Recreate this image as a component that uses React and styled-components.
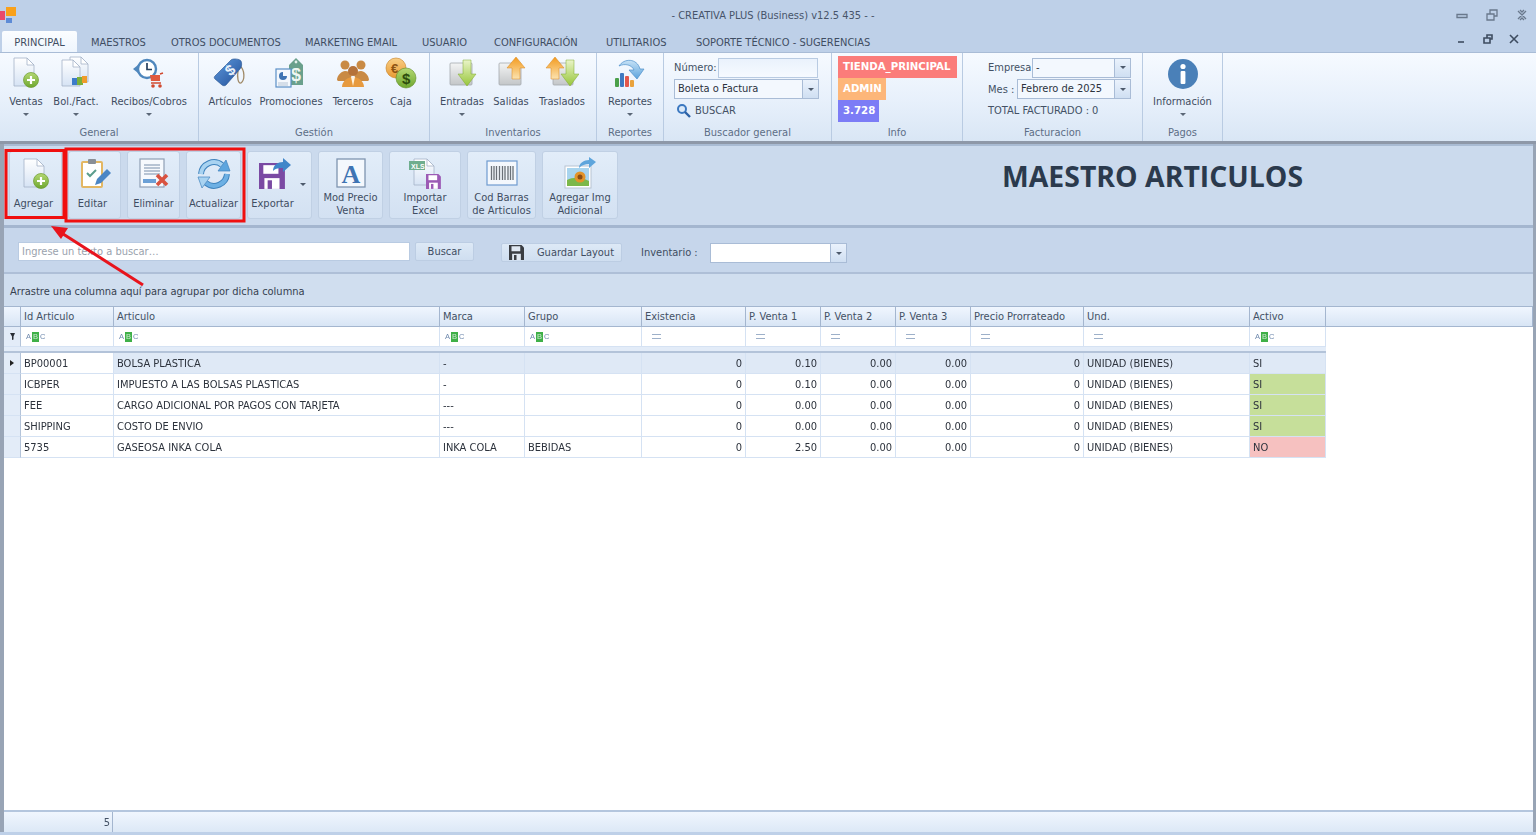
import React from 'react';
import styled, { createGlobalStyle } from 'styled-components';

const GlobalStyle = createGlobalStyle`
  html, body { margin: 0; padding: 0; height: 100%; overflow: hidden; }
  body { background: #bed0e8; font-family: "DejaVu Sans Condensed", "DejaVu Sans", "Liberation Sans", sans-serif; font-stretch: condensed; }
  #root { height: 100%; }
`;

const Page = styled.div`
  position: relative;
  width: 1536px;
  height: 835px;
  display: flex;
  flex-direction: column;
  overflow: hidden;
  font-size: 11px;
  color: #435165;
  filter: blur(0.35px);
`;

/* title bar + tabs */
const TitleBar = styled.div`
  height: 30px;
  display: grid;
  grid-template-columns: 40px 1fr 120px;
  align-items: center;
  background: #bed0e8;
`;
const Logo = styled.svg`
  width: 18px;
  height: 20px;
  display: block;
`;
const WindowTitle = styled.div`
  text-align: center;
  padding-left: 90px;
  font-size: 11px;
  color: #47546a;
`;
const WindowBtns = styled.div`
  display: flex;
  justify-content: flex-end;
  gap: 16px;
  padding-right: 7px;
`;
const TabStrip = styled.div`
  height: 22px;
  display: flex;
  align-items: flex-end;
  padding-left: 2px;
  background: #bed0e8;
`;
const Tab = styled.div`
  height: 21px;
  width: ${p => p.$w}px;
  line-height: 24px;
  text-align: ${p => (p.$active ? 'center' : 'left')};
  font-size: 11px;
  white-space: nowrap;
  color: #3f4d62;
  background: ${p => (p.$active ? 'linear-gradient(#fbfdff, #eef5fd)' : 'transparent')};
  border-radius: 2px 2px 0 0;
`;
const TabGap = styled.div`
  width: 14px;
`;
const TabSpacer = styled.div`
  flex: 1;
`;
const MdiBtns = styled.div`
  display: flex;
  gap: 12px;
  padding: 0 15px 6px 0;
`;

/* ribbon */
const Ribbon = styled.div`
  height: 89px;
  display: flex;
  background: linear-gradient(#f6faff, #e7f0fb 55%, #d9e6f5);
  border-top: 1px solid #a9bcd6;
  box-sizing: border-box;
`;
const Group = styled.div`
  width: ${p => p.$w}px;
  display: flex;
  flex-direction: column;
  border-right: 1px solid #b9cbe2;
  box-sizing: border-box;
`;
const GroupBody = styled.div`
  flex: 1;
  display: flex;
  padding: ${p => (p.$fields ? 4 : 3)}px 0 0 ${p => p.$pad || 0}px;
  flex-direction: ${p => (p.$col ? 'column' : 'row')};
`;
const GroupLabel = styled.div`
  height: 17px;
  line-height: 17px;
  text-align: center;
  font-size: 11px;
  color: #5d6e86;
`;
const BigBtn = styled.div`
  width: ${p => p.$w}px;
  display: flex;
  flex-direction: column;
  align-items: center;
  white-space: nowrap;
  font-size: 11px;
  color: #3f4d62;
`;
const BigLabel = styled.div`
  line-height: 14px;
  margin-top: 5px;
`;
const Caret = styled.div`
  width: 0;
  height: 0;
  margin-top: 4px;
  border: 3px solid transparent;
  border-top: 3px solid #5b6777;
  border-bottom: 0;
`;
const FieldRow = styled.div`
  height: 21.5px;
  width: ${p => (p.$w ? `${p.$w}px` : 'auto')};
  display: flex;
  align-items: center;
  justify-content: ${p => (p.$between ? 'space-between' : 'flex-start')};
  white-space: nowrap;
  font-size: 11px;
  color: #435165;
`;
const FieldLabel = styled.span`
  width: ${p => p.$w}px;
  flex: none;
`;
const FieldInput = styled.div`
  width: ${p => p.$w}px;
  height: 20px;
  box-sizing: border-box;
  background: linear-gradient(#eaf2fc, #f6faff);
  border: 1px solid #b9cbe2;
`;
const ComboBox = styled.div`
  width: ${p => p.$w}px;
  height: 20px;
  margin-top: ${p => p.$mt || 0}px;
  box-sizing: border-box;
  display: flex;
  border: 1px solid #a9bcd6;
  background: ${p => p.$bg || '#f3f8fe'};
  color: #2c333e;
  font-size: 11px;
`;
const ComboText = styled.div`
  flex: 1;
  line-height: 18px;
  padding-left: 3px;
`;
const ComboArrow = styled.div`
  width: 15px;
  display: flex;
  align-items: center;
  justify-content: center;
  background: linear-gradient(#eaf2fc, #cfdff2);
  border-left: 1px solid #a9bcd6;
`;
const ArrowMark = styled.i`
  width: 0;
  height: 0;
  border: 3px solid transparent;
  border-top: 3px solid #4d5a6c;
  border-bottom: 0;
`;
const SearchLink = styled.div`
  display: flex;
  align-items: center;
  gap: 4px;
  padding-left: 2px;
  color: #435165;
`;
const Badge = styled.div`
  height: 22px;
  width: ${p => p.$w}px;
  box-sizing: border-box;
  padding-left: 5px;
  line-height: 22px;
  background: ${p => p.$bg};
  color: #fff;
  font-family: "DejaVu Sans", sans-serif;
  font-stretch: normal;
  font-weight: 700;
  font-size: 10.2px;
  white-space: nowrap;
`;

const Separator = styled.div`
  height: 3px;
  background: #8e98a8;
`;

/* main area */
const Main = styled.div`
  flex: 1;
  display: flex;
  flex-direction: column;
  background: #fff;
  border-left: 4px solid #98a4b5;
  border-right: 3px solid #98a4b5;
  min-height: 0;
`;
const Toolbar = styled.div`
  height: 84px;
  box-sizing: border-box;
  display: flex;
  gap: 6px;
  padding: 5px 0 0 5px;
  background: #cbdaed;
  border-top: 2px solid #a9bbd3;
  border-bottom: 3px solid #a4b6cf;
`;
const ToolBtn = styled.div`
  position: relative;
  width: ${p => p.$w}px;
  height: 68px;
  box-sizing: border-box;
  padding: 5px ${p => p.$pr || 0}px 0 0;
  display: flex;
  flex-direction: column;
  align-items: center;
  text-align: center;
  background: linear-gradient(#e2edf9, #d3e1f2);
  border: 1px solid #c0d0e4;
  border-radius: 3px;
  font-size: 11px;
  color: #3f4d62;
`;
const ToolLabel = styled.div`
  line-height: 13px;
  margin-top: ${p => (p.$two ? 0 : 6)}px;
  margin-right: ${p => p.$shift || 0}px;
  white-space: pre-line;
`;
const DropMark = styled.i`
  position: absolute;
  right: 5px;
  top: 31px;
  width: 0;
  height: 0;
  border: 3px solid transparent;
  border-top: 3px solid #4d5a6c;
  border-bottom: 0;
`;
const PageTitle = styled.h1`
  margin: 5px 0 0 378px;
  font-family: "Open Sans", sans-serif;
  font-stretch: normal;
  font-weight: 700;
  font-size: 28.4px;
  line-height: 40px;
  color: #2b3a4d;
  white-space: nowrap;
`;
const SearchBar = styled.div`
  height: 46px;
  box-sizing: border-box;
  display: flex;
  align-items: center;
  padding: 3px 0 0 14px;
  background: #c6d6eb;
  border-bottom: 2px solid #aebfd7;
`;
const SearchInput = styled.div`
  width: 392px;
  height: 19px;
  box-sizing: border-box;
  padding-left: 3px;
  line-height: 18px;
  background: #fff;
  border: 1px solid #b9cbe2;
  color: #9aa2ad;
  font-size: 11px;
`;
const FlatBtn = styled.div`
  width: ${p => p.$w}px;
  height: 19px;
  box-sizing: border-box;
  margin-left: ${p => p.$ml}px;
  margin-top: ${p => p.$mt || 0}px;
  display: flex;
  align-items: center;
  justify-content: center;
  gap: 13px;
  background: linear-gradient(#dde9f6, #cfdef0);
  border: 1px solid #bccde3;
  border-radius: 2px;
  font-size: 11px;
  color: #3f4d62;
`;
const InvLabel = styled.div`
  width: 69px;
  margin: 2px 0 0 19px;
  font-size: 11px;
  color: #3f4d62;
`;
const GroupPanel = styled.div`
  height: 32px;
  line-height: 36px;
  box-sizing: border-box;
  padding-left: 6px;
  background: #d0deef;
  font-size: 11px;
  color: #36414f;
`;

/* grid */
const COLS = '17px 93px 326px 85px 117px 104px 75px 75px 75px 113px 166px 76px 1fr';
const GridRow = styled.div`
  display: grid;
  grid-template-columns: ${COLS};
  height: ${p => p.$h}px;
  box-sizing: border-box;
`;
const HeadCell = styled.div`
  box-sizing: border-box;
  padding-left: 3px;
  line-height: 19px;
  background: linear-gradient(#f0f6fe, #d8e5f5);
  border-top: 1px solid #a4b6cf;
  border-bottom: 1px solid #a4b6cf;
  border-right: 1px solid #a4b6cf;
  font-size: 11px;
  color: #435165;
  white-space: nowrap;
`;
const FilterCell = styled.div`
  box-sizing: border-box;
  display: flex;
  align-items: center;
  padding-left: ${p => (p.$num ? 10 : 5)}px;
  background: #fff;
  border-right: 1px solid ${p => (p.$blank ? 'transparent' : '#d5e2f3')};
  border-bottom: 1px solid ${p => (p.$blank ? 'transparent' : '#d5e2f3')};
`;
const Abc = styled.span`
  display: inline-flex;
  align-items: center;
  font-family: "Liberation Sans", sans-serif;
  font-stretch: normal;
  font-size: 7.5px;
  line-height: 10px;
  color: #6f89ad;
`;
const AbcMid = styled.b`
  display: inline-block;
  width: 7px;
  height: 10px;
  margin: 0 1px;
  text-align: center;
  background: #3fb048;
  color: #cfe9d2;
  font-weight: 400;
`;
const EqMark = styled.i`
  display: block;
  width: 9px;
  height: 3px;
  border-top: 1px solid #9db0c9;
  border-bottom: 1px solid #9db0c9;
`;
const GapRow = styled.div`
  height: 6px;
  width: 1322px;
  box-sizing: border-box;
  background: #e3ecf8;
  border-bottom: 2px solid #b3c3d9;
`;
const Cell = styled.div`
  box-sizing: border-box;
  padding: 2px 3px 0;
  line-height: 18px;
  text-align: ${p => (p.$right ? 'right' : 'left')};
  white-space: nowrap;
  font-size: 11px;
  color: #2c323c;
  background: ${p => p.$bg || '#fff'};
  border-right: 1px solid #d5e2f3;
  border-bottom: 1px solid #d5e2f3;
`;
const IndCell = styled.div`
  display: flex;
  align-items: center;
  justify-content: center;
  box-sizing: border-box;
  background: #e3ecf8;
  border-right: 1px solid #b3c3d9;
  border-bottom: 1px solid #d5e2f3;
`;
const RowMark = styled.i`
  width: 0;
  height: 0;
  border: 3px solid transparent;
  border-left: 4px solid #222;
  border-right: 0;
`;
const GridBody = styled.div`
  flex: 1;
  background: #fff;
  min-height: 0;
`;
const Footer = styled.div`
  height: 22px;
  box-sizing: border-box;
  display: grid;
  grid-template-columns: 109px 1fr;
  background: linear-gradient(#f0f6fe, #dce8f6);
  border-top: 2px solid #b4c6de;
`;
const FootTotal = styled.div`
  text-align: right;
  padding-right: 2px;
  line-height: 21px;
  font-size: 11px;
  color: #435165;
  border-right: 1px solid #a4b6cf;
`;
const BottomEdge = styled.div`
  height: 3px;
  background: #bed0e8;
`;
const Markup = styled.svg`
  position: absolute;
  left: 0;
  top: 0;
  pointer-events: none;
`;
const Icon = styled.svg`
  width: ${p => p.$s || 34}px;
  height: ${p => p.$s || 34}px;
  display: block;
  flex: none;
`;
const Defs = styled.svg`
  width: 0;
  height: 0;
  display: block;
`;

/* shared svg parts */
const PlusCoin = ({ x = 22, y = 24, r = 7.5 }) => (
  <g>
    <circle cx={x} cy={y} r={r} fill="url(#gGreen)" stroke="#6c9a2c" strokeWidth=".7" />
    <path d={`M${x - 4} ${y}h8M${x} ${y - 4}v8`} stroke="#fff" strokeWidth="2.2" />
  </g>
);
const Doc = ({ x = 5, y = 2, w = 20, h = 28 }) => (
  <g>
    <path d={`M${x} ${y}h${w - 7}l7 7v${h - 7}h-${w}z`} fill="url(#gPaper)" stroke="#a5b3c8" strokeWidth=".8" />
    <path d={`M${x + w - 7} ${y}v7h7z`} fill="#fff" stroke="#a5b3c8" strokeWidth=".8" />
  </g>
);

const DocPlusIcon = () => <Icon viewBox="0 0 34 34"><Doc /><PlusCoin /></Icon>;
const BolIcon = () => (
  <Icon viewBox="0 0 34 34">
    <Doc x={11} y={1} w={18} h={25} />
    <Doc x={3} y={4} w={18} h={26} />
    <rect x="13" y="22" width="6" height="7" fill="#3d7cc9" />
    <rect x="18" y="21" width="6" height="8" fill="#7bb03a" />
    <rect x="23" y="20" width="5" height="7" fill="#ef9b2b" />
  </Icon>
);
const RecibosIcon = () => (
  <Icon viewBox="0 0 34 34">
    <circle cx="15" cy="13" r="9" fill="#fff" stroke="#4f87bd" strokeWidth="2.4" />
    <path d="M15 7v6.5h5" fill="none" stroke="#27405e" strokeWidth="1.7" />
    <path d="M1 13l5-4v8z" fill="#4f87bd" />
    <path d="M18 19h10v6H19z" fill="#e0593e" />
    <path d="M28 18l3-1M19 27h10" stroke="#d0492f" strokeWidth="1.5" />
    <circle cx="21" cy="30" r="1.8" fill="#d0492f" />
    <circle cx="28" cy="30" r="1.8" fill="#d0492f" />
  </Icon>
);
const TagIcon = () => (
  <Icon viewBox="0 0 34 34">
    <path d="M27 10c5 4 5 14 1 17-3 1-4-6-3-12" fill="none" stroke="#a08a68" strokeWidth="1.3" />
    <path d="M2 20L18 4c2-2 9-1 10 1 1 2 1 6-1 8L13 29c-1 1-3 1-4 0L2 23c-1-1-1-2 0-3z" fill="url(#gBlue)" stroke="#23518f" strokeWidth=".6" />
    <text x="14" y="22" fontSize="15" fontWeight="700" fill="#eaf2fb" fontFamily="Liberation Sans" transform="rotate(-40 14 17)">$</text>
  </Icon>
);
const PromoIcon = () => (
  <Icon viewBox="0 0 34 34">
    <path d="M15 9l7-7 7 7v20H15z" fill="#6aa08c" />
    <circle cx="22" cy="6" r="1.4" fill="#e6f0ec" />
    <text x="17" y="25" fontSize="18" fontWeight="700" fill="#eef6f2" fontFamily="Liberation Sans">$</text>
    <rect x="2" y="13" width="15" height="18" fill="#f4f8fd" stroke="#5a8fc7" strokeWidth="1.2" />
    <path d="M9 16a4 4 0 1 0 4 4H9z" fill="#3f74b3" />
    <path d="M4 27h10M4 29h10" stroke="#a6b6ca" strokeWidth=".8" />
  </Icon>
);
const PeopleIcon = () => (
  <Icon viewBox="0 0 34 34">
    <g fill="#c98a44">
      <circle cx="9" cy="9" r="4.5" />
      <circle cx="25" cy="9" r="4.5" />
      <path d="M1 24c0-5 5-9 8-9s6 2 7 4l-3 6H2zM33 24c0-5-5-9-8-9s-6 2-7 4l3 6h11z" />
    </g>
    <circle cx="17" cy="15" r="5" fill="#b5723a" />
    <path d="M6 31c0-6 6-10 11-10s11 4 11 10z" fill="#e79a3f" />
    <path d="M15 21h4l-2 9z" fill="#fff2dc" />
  </Icon>
);
const CajaIcon = () => (
  <Icon viewBox="0 0 34 34">
    <circle cx="12" cy="12" r="10" fill="url(#gOrange)" stroke="#c67d1f" strokeWidth=".6" />
    <text x="7" y="17" fontSize="13" fontWeight="700" fill="#8e5312" fontFamily="Liberation Sans">€</text>
    <circle cx="22" cy="22" r="10" fill="url(#gGreen)" stroke="#5f8c25" strokeWidth=".6" />
    <text x="18" y="28" fontSize="15" fontWeight="700" fill="#2d4d0d" fontFamily="Liberation Sans">$</text>
  </Icon>
);
const Box3d = ({ x = 5, w = 22 }) => <rect x={x} y="7" width={w} height="22" rx="1" fill="url(#gGray)" stroke="#a3a8ad" strokeWidth=".8" />;
const DownArrow = ({ x = 22 }) => <path d={`M${x - 4} 4h8v14h5L${x} 30 ${x - 9} 18h5z`} fill="url(#gLime)" stroke="#7fa82c" strokeWidth=".5" />;
const UpArrow = ({ x = 22 }) => <path d={`M${x} 1l9 11h-5v11h-8V12h-5z`} fill="url(#gAmber)" stroke="#d9861c" strokeWidth=".5" />;
const EntradaIcon = () => <Icon viewBox="0 0 34 34"><Box3d /><DownArrow /></Icon>;
const SalidaIcon = () => <Icon viewBox="0 0 34 34"><Box3d /><UpArrow /></Icon>;
const TrasladoIcon = () => <Icon viewBox="0 0 34 34"><Box3d x={8} w={20} /><UpArrow x={10} /><DownArrow x={25} /></Icon>;
const ReportesIcon = () => (
  <Icon viewBox="0 0 34 34">
    <path d="M6 10C11 2 24 2 27 13h4l-7 10-8-9h5C19 9 12 7 6 10z" fill="url(#gSky)" stroke="#4d8fca" strokeWidth=".7" />
    <rect x="2" y="22" width="4" height="9" rx="1" fill="#4aa04a" />
    <rect x="7" y="17" width="4" height="14" rx="1" fill="#3f79c0" />
    <rect x="12" y="20" width="4" height="11" rx="1" fill="#e2574c" />
    <rect x="17" y="24" width="4" height="7" rx="1" fill="#e9a23b" />
  </Icon>
);
const InfoIcon = () => (
  <Icon viewBox="0 0 34 34">
    <circle cx="17" cy="18" r="15" fill="#4a80b8" />
    <circle cx="17" cy="10.5" r="2.6" fill="#fff" />
    <rect x="14.6" y="15" width="4.8" height="13" rx="1" fill="#fff" />
  </Icon>
);
const EditIcon = () => (
  <Icon viewBox="0 0 34 34">
    <rect x="4" y="5" width="20" height="25" rx="1" fill="#fff" stroke="#e3b763" strokeWidth="2" />
    <rect x="10" y="2" width="8" height="5" rx="1" fill="#8a8f96" />
    <path d="M9 16l3 3 6-6" fill="none" stroke="#5b9d8d" strokeWidth="2" />
    <path d="M17 28l2-6 10-10 4 4-10 10z" fill="#4b86c5" />
  </Icon>
);
const DeleteIcon = () => (
  <Icon viewBox="0 0 34 34">
    <rect x="3" y="2" width="24" height="28" fill="#f6f9fd" stroke="#8f9fb5" strokeWidth="1.2" />
    <path d="M7 8h16M7 11h16M7 14h16M7 17h16" stroke="#a3b2c6" strokeWidth="1.3" />
    <rect x="6" y="22" width="13" height="4" fill="#6ba0d6" />
    <path d="M20 18l10 10M30 18L20 28" stroke="#d9523f" strokeWidth="3.6" />
  </Icon>
);
const RefreshIcon = () => (
  <Icon viewBox="0 0 34 34">
    <path d="M4 17A13 13 0 0 1 25 8" fill="none" stroke="#3f83bd" strokeWidth="6" />
    <path d="M4 17A13 13 0 0 1 25 8" fill="none" stroke="#a9d3f1" strokeWidth="4" />
    <path d="M30 17a13 13 0 0 1-21 9" fill="none" stroke="#3f83bd" strokeWidth="6" />
    <path d="M30 17a13 13 0 0 1-21 9" fill="none" stroke="#6db0e4" strokeWidth="4" />
    <path d="M21 14h12L29 3z" fill="#5da5de" stroke="#3f83bd" strokeWidth=".7" />
    <path d="M13 20H1l4 11z" fill="#a9d3f1" stroke="#3f83bd" strokeWidth=".7" />
  </Icon>
);
const Floppy = ({ x, y, s, c, inner = '#fff' }) => (
  <g transform={`translate(${x} ${y}) scale(${s})`}>
    <path d="M0 0h20l4 4v20H0z" fill={c} />
    <rect x="4" y="2" width="14" height="8" fill={inner} />
    <rect x="5" y="14" width="14" height="10" fill={inner} />
    <rect x="8" y="16" width="4" height="8" fill={c} />
  </g>
);
const ExportIcon = () => (
  <Icon viewBox="0 0 34 34">
    <Floppy x={1} y={6} s={1.08} c="#7b4aa3" />
    <path d="M15 14c0-6 5-9 10-9V1l8 7-8 7v-4c-4 0-7 0-10 3z" fill="#3f86c9" />
  </Icon>
);
const LetterIcon = () => (
  <Icon viewBox="0 0 34 34">
    <rect x="3" y="2" width="28" height="28" fill="#f4f8fd" stroke="#7f94b0" strokeWidth="1.3" />
    <text x="17" y="26" textAnchor="middle" fontSize="26" fontWeight="700" fill="#3f74b3" fontFamily="Liberation Serif">A</text>
  </Icon>
);
const ExcelIcon = () => (
  <Icon viewBox="0 0 34 34">
    <Doc x={6} y={2} w={20} h={26} />
    <rect x="1" y="4" width="16" height="9" fill="#6fae8e" />
    <text x="3" y="11.5" fontSize="7" fontWeight="700" fill="#fff" fontFamily="Liberation Sans">XLS</text>
    <Floppy x={18} y={17} s={0.62} c="#9c5bb5" />
  </Icon>
);
const BarcodeIcon = () => (
  <Icon viewBox="0 0 34 34">
    <rect x="2" y="4" width="30" height="24" fill="#f4f8fd" stroke="#6e9bd0" strokeWidth="1.2" />
    <path d="M6.5 9v14M9 9v14M11.5 9v14M14.5 9v14M17.5 9v14M20 9v14M23 9v14M25.5 9v14M28 9v14" stroke="#6b7178" strokeWidth="1.3" />
  </Icon>
);
const ImageIcon = () => (
  <Icon viewBox="0 0 34 34">
    <rect x="2" y="9" width="26" height="22" fill="#fff" stroke="#b8c4d2" strokeWidth="1" />
    <rect x="4" y="11" width="22" height="18" fill="#a8d4ee" />
    <path d="M4 29v-6c6-3 14-3 22 1v5z" fill="#7cb84a" />
    <circle cx="17" cy="20" r="5.5" fill="#e3942a" />
    <circle cx="17" cy="20" r="2.5" fill="#8a4d13" />
    <path d="M16 11c0-5 5-8 10-8V0l7 5-7 6V7c-4 0-7 1-10 4z" fill="#5ea5dc" />
  </Icon>
);
const SaveIcon = () => (
  <Icon $s={15} viewBox="0 0 24 24"><Floppy x={0} y={0} s={1} c="#3a3d42" inner="#dfe7f1" /></Icon>
);
const LensIcon = () => (
  <Icon $s={15} viewBox="0 0 15 15">
    <circle cx="6" cy="6" r="4" fill="#dbe9f8" stroke="#3b78c0" strokeWidth="2" />
    <path d="M9 9l5 5" stroke="#2d62a5" strokeWidth="2.4" />
  </Icon>
);
const WinIcon = ({ d }) => (
  <Icon $s={14} viewBox="0 0 14 14">
    <path d={d} fill="none" stroke="#69788c" strokeWidth="1.3" />
  </Icon>
);
const MdiIcon = ({ d }) => (
  <Icon $s={14} viewBox="0 0 14 14">
    <path d={d} fill="none" stroke="#3e4c60" strokeWidth="1.6" />
  </Icon>
);

const AbcIcon = () => <Abc>A<AbcMid>B</AbcMid>C</Abc>;

const headers = ['Id Articulo', 'Articulo', 'Marca', 'Grupo', 'Existencia', 'P. Venta 1', 'P. Venta 2', 'P. Venta 3', 'Precio Prorrateado', 'Und.', 'Activo'];
const filterKinds = ['abc', 'abc', 'abc', 'abc', 'eq', 'eq', 'eq', 'eq', 'eq', 'eq', 'abc'];
const rows = [
  ['BP00001', 'BOLSA PLASTICA', '-', '', '0', '0.10', '0.00', '0.00', '0', 'UNIDAD (BIENES)', 'SI'],
  ['ICBPER', 'IMPUESTO A LAS BOLSAS PLASTICAS', '-', '', '0', '0.10', '0.00', '0.00', '0', 'UNIDAD (BIENES)', 'SI'],
  ['FEE', 'CARGO ADICIONAL POR PAGOS CON TARJETA', '---', '', '0', '0.00', '0.00', '0.00', '0', 'UNIDAD (BIENES)', 'SI'],
  ['SHIPPING', 'COSTO DE ENVIO', '---', '', '0', '0.00', '0.00', '0.00', '0', 'UNIDAD (BIENES)', 'SI'],
  ['5735', 'GASEOSA INKA COLA', 'INKA COLA', 'BEBIDAS', '0', '2.50', '0.00', '0.00', '0', 'UNIDAD (BIENES)', 'NO'],
];
const isNum = i => i >= 4 && i <= 8;

function cellBg(rowIdx, colIdx, value) {
  if (rowIdx === 0) return colIdx === 0 ? '#fff' : '#dfe9f6';
  if (colIdx === 10) return value === 'NO' ? '#f6c1c0' : '#c6df9a';
  return '#fff';
}

const tabs = [
  ['MAESTROS', 80], ['OTROS DOCUMENTOS', 134], ['MARKETING EMAIL', 117], ['USUARIO', 72],
  ['CONFIGURACIÓN', 112], ['UTILITARIOS', 90], ['SOPORTE TÉCNICO - SUGERENCIAS', 200],
];

const tools = [
  { w: 53, label: 'Agregar', icon: <DocPlusIcon />, shift: 4 },
  { w: 53, label: 'Editar', icon: <EditIcon />, shift: 4 },
  { w: 53, label: 'Eliminar', icon: <DeleteIcon /> },
  { w: 55, label: 'Actualizar', icon: <RefreshIcon /> },
  { w: 65, label: 'Exportar', icon: <ExportIcon />, drop: true, pr: 10, shift: 4 },
  { w: 65, label: 'Mod Precio\nVenta', icon: <LetterIcon />, two: true },
  { w: 72, label: 'Importar\nExcel', icon: <ExcelIcon />, two: true },
  { w: 69, label: 'Cod Barras\nde Articulos', icon: <BarcodeIcon />, two: true },
  { w: 76, label: 'Agregar Img\nAdicional', icon: <ImageIcon />, two: true },
];

const Big = ({ w, label, icon, caret }) => (
  <BigBtn $w={w}>
    {icon}
    <BigLabel>{label}</BigLabel>
    {caret && <Caret />}
  </BigBtn>
);

const Combo = ({ w, text, bg, mt }) => (
  <ComboBox $w={w} $bg={bg} $mt={mt}>
    <ComboText>{text}</ComboText>
    <ComboArrow><ArrowMark /></ComboArrow>
  </ComboBox>
);

const SharedGradients = () => (
  <Defs>
    <defs>
      <linearGradient id="gPaper" x1="0" y1="0" x2="0" y2="1"><stop offset="0" stopColor="#fff" /><stop offset="1" stopColor="#d6e3f4" /></linearGradient>
      <linearGradient id="gGreen" x1="0" y1="0" x2="0" y2="1"><stop offset="0" stopColor="#b4d873" /><stop offset="1" stopColor="#6ea72f" /></linearGradient>
      <linearGradient id="gBlue" x1="0" y1="0" x2="1" y2="1"><stop offset="0" stopColor="#5f9ade" /><stop offset="1" stopColor="#214f98" /></linearGradient>
      <linearGradient id="gOrange" x1="0" y1="0" x2="0" y2="1"><stop offset="0" stopColor="#f9cf85" /><stop offset="1" stopColor="#e89a34" /></linearGradient>
      <linearGradient id="gGray" x1="0" y1="0" x2="0" y2="1"><stop offset="0" stopColor="#f3f4f4" /><stop offset="1" stopColor="#c3c6c8" /></linearGradient>
      <linearGradient id="gLime" x1="0" y1="0" x2="0" y2="1"><stop offset="0" stopColor="#eaf4c8" /><stop offset="1" stopColor="#97c63a" /></linearGradient>
      <linearGradient id="gAmber" x1="0" y1="0" x2="0" y2="1"><stop offset="0" stopColor="#f39a1e" /><stop offset="1" stopColor="#fbe3b0" /></linearGradient>
      <linearGradient id="gSky" x1="0" y1="0" x2="0" y2="1"><stop offset="0" stopColor="#c7e2f6" /><stop offset="1" stopColor="#5aa2dc" /></linearGradient>
    </defs>
  </Defs>
);

export default function App() {
  return (
    <>
      <GlobalStyle />
      <SharedGradients />
      <Page>
        <TitleBar>
          <Logo viewBox="0 0 18 20">
            <rect x="0" y="6" width="5" height="9" fill="#ea4a6c" />
            <rect x="6" y="2" width="10" height="9" fill="#f9a11b" />
            <rect x="6" y="13" width="6" height="5" fill="#5d8bd6" />
          </Logo>
          <WindowTitle>- CREATIVA PLUS (Business) v12.5 435 - -</WindowTitle>
          <WindowBtns>
            <WinIcon d="M2 6.5h10v3H2z" />
            <WinIcon d="M2 6h7v6H2zM5 6V2h7v6H9" />
            <WinIcon d="M3 3l8 8M11 3l-8 8M5 2l2 2 2-2M5 12l2-2 2 2" />
          </WindowBtns>
        </TitleBar>
        <TabStrip>
          <Tab $active $w={75}>PRINCIPAL</Tab>
          <TabGap />
          {tabs.map(([t, w]) => <Tab key={t} $w={w}>{t}</Tab>)}
          <TabSpacer />
          <MdiBtns>
            <MdiIcon d="M3 10h6" />
            <MdiIcon d="M3 6h6v5H3zM6 6V3h5v4H9" />
            <MdiIcon d="M3 3l8 8M11 3l-8 8" />
          </MdiBtns>
        </TabStrip>
        <Ribbon>
          <Group $w={199}>
            <GroupBody $pad={2}>
              <Big w={48} label="Ventas" icon={<DocPlusIcon />} caret />
              <Big w={52} label="Bol./Fact." icon={<BolIcon />} caret />
              <Big w={94} label="Recibos/Cobros" icon={<RecibosIcon />} caret />
            </GroupBody>
            <GroupLabel>General</GroupLabel>
          </Group>
          <Group $w={231}>
            <GroupBody $pad={5}>
              <Big w={52} label="Artículos" icon={<TagIcon />} />
              <Big w={70} label="Promociones" icon={<PromoIcon />} />
              <Big w={54} label="Terceros" icon={<PeopleIcon />} />
              <Big w={42} label="Caja" icon={<CajaIcon />} />
            </GroupBody>
            <GroupLabel>Gestión</GroupLabel>
          </Group>
          <Group $w={167}>
            <GroupBody $pad={6}>
              <Big w={52} label="Entradas" icon={<EntradaIcon />} caret />
              <Big w={46} label="Salidas" icon={<SalidaIcon />} />
              <Big w={56} label="Traslados" icon={<TrasladoIcon />} />
            </GroupBody>
            <GroupLabel>Inventarios</GroupLabel>
          </Group>
          <Group $w={67}>
            <GroupBody>
              <Big w={66} label="Reportes" icon={<ReportesIcon />} caret />
            </GroupBody>
            <GroupLabel>Reportes</GroupLabel>
          </Group>
          <Group $w={168}>
            <GroupBody $col $fields $pad={10}>
              <FieldRow><FieldLabel $w={44}>Número:</FieldLabel><FieldInput $w={100} /></FieldRow>
              <FieldRow><Combo w={145} text="Boleta o Factura" /></FieldRow>
              <FieldRow><SearchLink><LensIcon />BUSCAR</SearchLink></FieldRow>
            </GroupBody>
            <GroupLabel>Buscador general</GroupLabel>
          </Group>
          <Group $w={131}>
            <GroupBody $col $pad={6}>
              <Badge $w={119} $bg="#fb7c7a">TIENDA_PRINCIPAL</Badge>
              <Badge $w={48} $bg="#fdb679">ADMIN</Badge>
              <Badge $w={41} $bg="#7c7cf6">3.728</Badge>
            </GroupBody>
            <GroupLabel>Info</GroupLabel>
          </Group>
          <Group $w={180}>
            <GroupBody $col $fields $pad={25}>
              <FieldRow $w={143} $between>Empresa<Combo w={99} text="-" /></FieldRow>
              <FieldRow $w={143} $between>Mes :<Combo w={114} text="Febrero de 2025" /></FieldRow>
              <FieldRow>TOTAL FACTURADO : 0</FieldRow>
            </GroupBody>
            <GroupLabel>Facturacion</GroupLabel>
          </Group>
          <Group $w={80}>
            <GroupBody>
              <Big w={79} label="Información" icon={<InfoIcon />} caret />
            </GroupBody>
            <GroupLabel>Pagos</GroupLabel>
          </Group>
        </Ribbon>
        <Separator />
        <Main>
          <Toolbar>
            {tools.map(t => (
              <ToolBtn key={t.label} $w={t.w} $pr={t.pr}>
                {t.icon}
                <ToolLabel $two={t.two} $shift={t.shift}>{t.label}</ToolLabel>
                {t.drop && <DropMark />}
              </ToolBtn>
            ))}
            <PageTitle>MAESTRO ARTICULOS</PageTitle>
          </Toolbar>
          <SearchBar>
            <SearchInput>Ingrese un texto a buscar…</SearchInput>
            <FlatBtn $w={59} $ml={5}>Buscar</FlatBtn>
            <FlatBtn $w={121} $ml={27} $mt={2}><SaveIcon />Guardar Layout</FlatBtn>
            <InvLabel>Inventario :</InvLabel>
            <Combo w={137} text="" bg="#fff" mt={3} />
          </SearchBar>
          <GroupPanel>Arrastre una columna aquí para agrupar por dicha columna</GroupPanel>
          <GridRow $h={21}>
            <HeadCell />
            {headers.map(h => <HeadCell key={h}>{h}</HeadCell>)}
            <HeadCell />
          </GridRow>
          <GridRow $h={20}>
            <IndCell>
              <Icon $s={9} viewBox="0 0 9 9"><path d="M2 1h5L5.5 4.5v3L4 8V4.5z" fill="#2a2e36" /></Icon>
            </IndCell>
            {filterKinds.map((k, i) => (
              <FilterCell key={i} $num={k === 'eq'}>{k === 'abc' ? <AbcIcon /> : <EqMark />}</FilterCell>
            ))}
            <FilterCell $blank />
          </GridRow>
          <GapRow />
          {rows.map((r, ri) => (
            <GridRow key={r[0]} $h={21}>
              <IndCell>{ri === 0 && <RowMark />}</IndCell>
              {r.map((v, ci) => (
                <Cell key={ci} $right={isNum(ci)} $bg={cellBg(ri, ci, v)}>{v}</Cell>
              ))}
            </GridRow>
          ))}
          <GridBody />
          <Footer><FootTotal>5</FootTotal></Footer>
        </Main>
        <BottomEdge />
        <Markup width="1536" height="835" viewBox="0 0 1536 835">
          <g fill="none" stroke="#f00f0f" strokeWidth="3">
            <rect x="6" y="150.5" width="58" height="67" />
            <rect x="66" y="149" width="178" height="72" />
          </g>
          <path d="M143 285L60 232" stroke="#e8141c" strokeWidth="3" />
          <path d="M51 226l17 2-7 11z" fill="#e8141c" />
        </Markup>
      </Page>
    </>
  );
}
